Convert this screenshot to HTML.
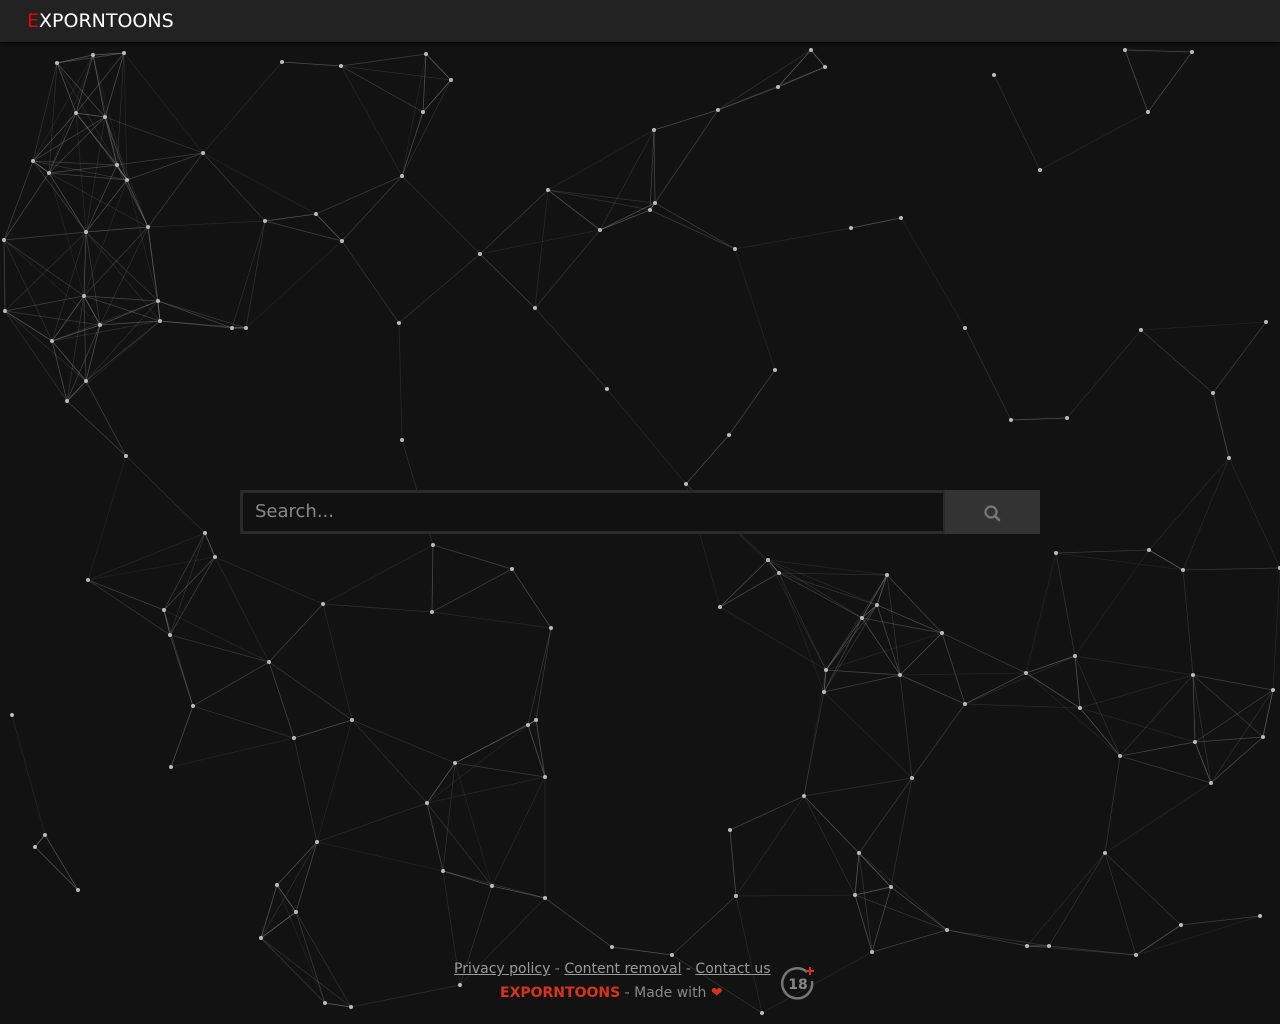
<!DOCTYPE html>
<html><head><meta charset="utf-8">
<style>
html,body{margin:0;padding:0;width:1280px;height:1024px;overflow:hidden;background:#121212;font-family:"DejaVu Sans","Liberation Sans",sans-serif}
#net{position:absolute;left:0;top:0}
.hdr{position:absolute;left:0;top:0;width:1280px;height:42px;background:#222;box-shadow:0 1px 3px #000}
.logo{position:absolute;left:27px;top:10px;font-size:19px;color:#fff;letter-spacing:0}
.logo b{color:#e4000f;font-weight:normal}
.search{position:absolute;left:240px;top:490px;width:800px;height:44px;background:#2a2a2a}
.search .inp{position:absolute;left:3px;top:3px;width:700px;height:38px;background:#111;color:#888;font-size:18px;line-height:38px;padding-left:12px;box-sizing:border-box}
.search .btn{position:absolute;left:705px;top:0;width:95px;height:44px;background:#333}
.l1,.l2{font-size:14px;color:#888;white-space:nowrap}
.l1 a{color:#999;text-decoration:underline}
.l1{position:absolute;left:454px;top:961px}
.l2{position:absolute;left:500px;top:985px}
.l2 b{color:#d8321c}
</style></head><body>
<svg id="net" width="1280" height="1024"></svg>
<div class="hdr"><div class="logo"><b>E</b>XPORNTOONS</div></div>
<div class="search"><div class="inp">Search...</div><div class="btn">
<svg width="95" height="44"><circle cx="46" cy="22" r="5.5" fill="none" stroke="#777" stroke-width="2.2"/><line x1="50" y1="26" x2="54" y2="30" stroke="#777" stroke-width="2.6" stroke-linecap="round"/></svg></div></div>
<div class="l1"><a>Privacy policy</a> - <a>Content removal</a> - <a>Contact us</a></div>
<div class="l2"><b>EXPORNTOONS</b> - Made with <span style="color:#d8321c">&#10084;</span></div>
<svg style="position:absolute;left:779px;top:964px" width="40" height="40"><path d="M28 8 A15 15 0 1 0 33 17" fill="none" stroke="#777" stroke-width="2.5"/><text x="19" y="25" font-size="14" font-weight="bold" fill="#888" text-anchor="middle" font-family="DejaVu Sans">18</text><path d="M31 3v8M27 7h8" stroke="#d8321c" stroke-width="2"/></svg>
<script>
var P=[[57,63],[93,55],[124,53],[76,113],[105,117],[117,165],[33,161],[49,173],[127,180],[86,232],[148,227],[4,240],[84,296],[158,301],[160,321],[5,311],[52,341],[100,325],[86,381],[67,401],[232,328],[246,328],[203,153],[265,221],[316,214],[342,241],[402,176],[423,112],[451,80],[426,54],[341,66],[282,62],[399,323],[480,254],[535,308],[548,190],[600,230],[650,210],[655,203],[654,130],[718,110],[778,87],[811,50],[825,67],[735,249],[851,228],[901,218],[775,370],[729,435],[686,484],[607,389],[402,440],[126,456],[205,533],[215,557],[88,580],[164,610],[170,635],[269,662],[193,706],[171,767],[294,738],[352,720],[323,604],[432,612],[433,545],[512,569],[551,628],[536,720],[545,777],[528,725],[455,763],[427,803],[443,871],[492,886],[545,898],[612,947],[672,955],[460,985],[317,842],[277,885],[296,912],[261,938],[325,1003],[351,1007],[35,847],[45,835],[78,890],[12,715],[720,607],[768,560],[779,573],[887,575],[862,618],[877,605],[942,633],[900,675],[826,670],[824,692],[965,704],[1026,673],[1075,656],[1080,708],[1120,756],[1149,550],[1056,553],[1183,570],[1193,675],[1195,742],[1211,783],[1263,737],[1273,690],[1280,568],[1229,458],[1213,393],[1141,330],[1266,322],[965,328],[1011,420],[1067,418],[912,778],[804,796],[859,853],[891,887],[855,895],[872,952],[947,930],[1027,946],[1049,946],[1105,853],[1136,955],[1181,925],[1260,916],[736,896],[730,830],[762,1013],[994,75],[1040,170],[1148,112],[1125,50],[1192,52]];
var s='';
for(var i=0;i<P.length;i++)for(var j=i+1;j<P.length;j++){var dx=P[i][0]-P[j][0],dy=P[i][1]-P[j][1],d=Math.sqrt(dx*dx+dy*dy);if(d<130){s+='<line x1="'+P[i][0]+'" y1="'+P[i][1]+'" x2="'+P[j][0]+'" y2="'+P[j][1]+'" stroke="#aaa" stroke-width="0.8" stroke-opacity="'+(0.55*(1-d/130)+0.1).toFixed(2)+'"/>';}}
for(var i=0;i<P.length;i++)s+='<circle cx="'+P[i][0]+'" cy="'+P[i][1]+'" r="2" fill="#bbb"/>';
document.getElementById('net').innerHTML=s;
</script>
</body></html>
